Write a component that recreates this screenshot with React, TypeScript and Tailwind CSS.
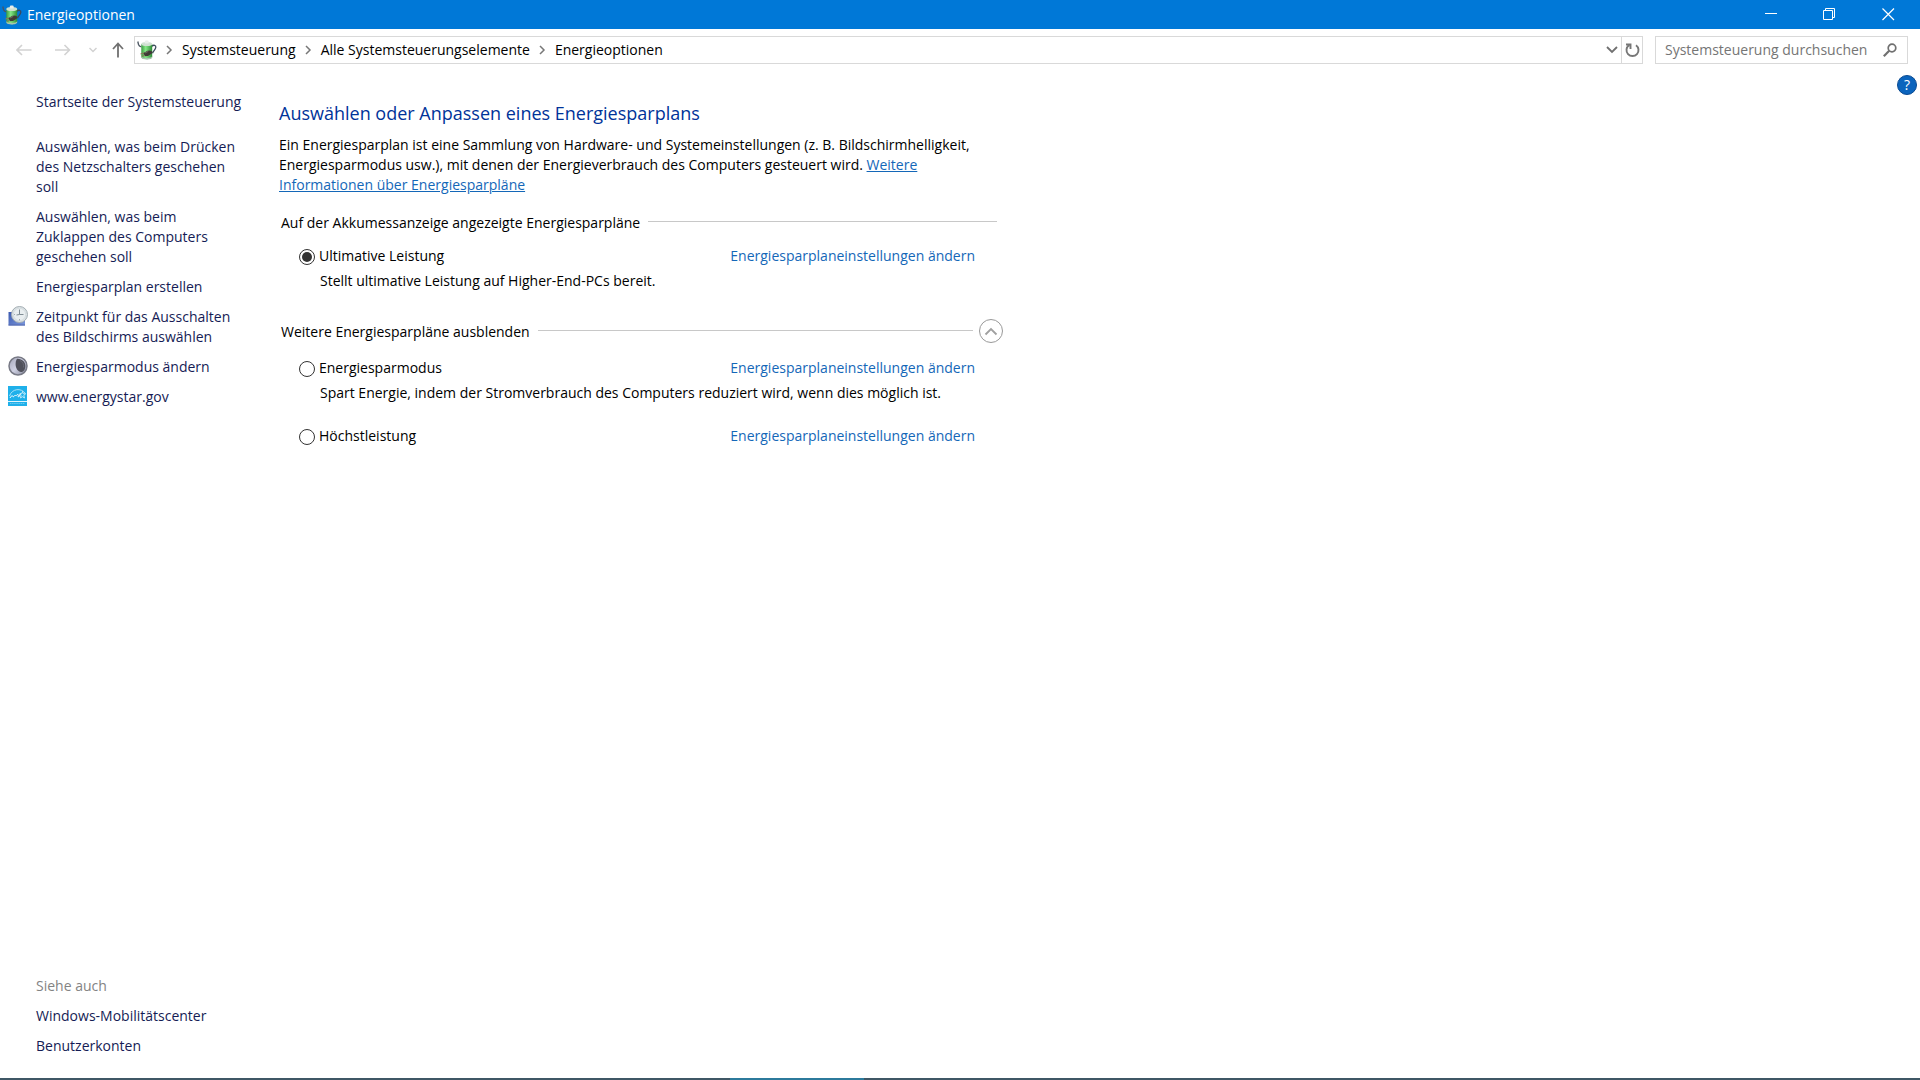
import { useState, type ReactNode } from "react";

const taskLinks = [
  { label: "Auswählen, was beim Drücken des Netzschalters geschehen soll", icon: null },
  { label: "Auswählen, was beim Zuklappen des Computers geschehen soll", icon: null },
  { label: "Energiesparplan erstellen", icon: null },
  { label: "Zeitpunkt für das Ausschalten des Bildschirms auswählen", icon: <ClockIcon /> },
  { label: "Energiesparmodus ändern", icon: <MoonIcon /> },
  { label: "www.energystar.gov", icon: <EnergyStarIcon /> },
];

const seeAlso = ["Windows-Mobilitätscenter", "Benutzerkonten"];

const crumbs = ["Systemsteuerung", "Alle Systemsteuerungselemente", "Energieoptionen"];

function BatteryIcon() {
  return (
    <svg width="20" height="20" viewBox="0 0 20 20" aria-hidden="true">
      <defs>
        <linearGradient id="cell" x1="0" x2="1" y1="0" y2="0">
          <stop offset="0" stopColor="#3a9a42" />
          <stop offset="0.4" stopColor="#86e886" />
          <stop offset="1" stopColor="#2b8a35" />
        </linearGradient>
      </defs>
      <path d="M.8 1.5 1.500 4.500C1.900 6 3 6.500 4.500 7" fill="none" stroke="#4a5560" strokeWidth="1.300" />
      <path d="M14.500 6.500c2-2 4.700-1.500 4.300.8-.4 2.200-2.300 3.400-3.300 6" fill="none" stroke="#3c4a5c" strokeWidth="1.300" />
      <path d="M4.300 4v13c0 3 10.900 3 10.900 0V4z" fill="url(#cell)" />
      <path d="M4.300 16v1.200c0 3 10.900 3 10.900 0V16c0 2.600-10.900 2.600-10.900 0z" fill="#a9c4ae" />
      <ellipse cx="9.750" cy="4" rx="5.450" ry="2" fill="#cfe0d1" />
      <rect x="7.800" y="0.600" width="3.900" height="3" rx="1.200" fill="#e9eeea" />
      <path d="m6 13.200 4.500-2.400 2.600-.3 2.400 1.300-.6 1.800-3.900 2.400-2.800.3z" fill="#3f3b35" />
      <path d="m3.500 14 3.200-.9M4.800 16.200l3-.9" stroke="#8a7a58" strokeWidth="1.100" />
      <path d="m8 13 3.200-1.600" stroke="#7d786c" strokeWidth="0.800" />
    </svg>
  );
}

function ClockIcon() {
  return (
    <svg width="20" height="20" viewBox="0 0 20 20" aria-hidden="true">
      <defs>
        <linearGradient id="screen" x1="0" x2="1" y1="0" y2="1">
          <stop offset="0" stopColor="#3c5ab0" />
          <stop offset="1" stopColor="#7c98dc" />
        </linearGradient>
      </defs>
      <path d="M.5 6H17v13.500H.5z" fill="url(#screen)" />
      <path d="M.5 19.500H17v-1H.5z" fill="#5468ac" />
      <circle cx="11.500" cy="8.500" r="8" fill="#dce3e6" stroke="#a3adb2" />
      <circle cx="11.500" cy="8.500" r="6.200" fill="#e9eef0" stroke="#cdd4d7" strokeWidth="0.600" />
      <path d="M11.500 3.500v5H15.500M11.500 8.500 8.500 9" fill="none" stroke="#7f8c94" />
      <path d="M11.500 13v1.500M6 8.500h1" stroke="#a3adb2" />
    </svg>
  );
}

function MoonIcon() {
  return (
    <svg width="20" height="20" viewBox="0 0 20 20" aria-hidden="true">
      <defs>
        <linearGradient id="moon" x1="0" x2="1" y1="0" y2="1">
          <stop offset="0" stopColor="#a3a5b8" />
          <stop offset="0.500" stopColor="#cfd1e2" />
          <stop offset="1" stopColor="#84869a" />
        </linearGradient>
      </defs>
      <circle cx="10" cy="10" r="9" fill="url(#moon)" stroke="#777985" strokeWidth="1.500" />
      <path d="M9 2.800C14.500 2.600 17.500 6.500 17.400 10c-.1 3.500-2 6.200-4.400 6-3-.3-5.200-3.500-5.400-7.200C7.500 6.300 8 4.200 9 2.800z" fill="#50515b" />
      <path d="M12 4.500c3 1.500 4 4 3.500 7" fill="none" stroke="#666771" />
    </svg>
  );
}

function EnergyStarIcon() {
  return (
    <svg width="19" height="20" viewBox="0 0 19 20" aria-hidden="true">
      <path d="M0 0h19v20H0z" fill="#1fb0ea" />
      <path d="M1.500 10C4 2.500 13 1.500 17.500 7.500" fill="none" stroke="#b9e6f8" strokeWidth="0.900" />
      <path d="M2 12c1-2 2.500-3 3-1.500s1.500-2 2.500-1 1.500-1.500 2.500-1-.5 3 .5 2.500 2-3.500 2-3.500" fill="none" stroke="#fff" />
      <path d="m14.500 5.500.8 2.200 2.200.2-1.700 1.500.7 2.600-2-1.300-2 1.200.5-2.400-1.500-1.600 2.200-.2z" fill="none" stroke="#e6f7fd" strokeWidth="0.800" />
      <path d="M0 15.500h19" stroke="#dff4fc" />
      <path d="M2 17.500h15" stroke="#6ccbf1" strokeDasharray="1.500 0.600" />
    </svg>
  );
}

function Chevron({ className }: { className: string }) {
  return (
    <svg className={className} width="8" height="10" viewBox="0 0 8 10" aria-hidden="true">
      <path d="m2 1 4 4-4 4" fill="none" stroke="currentColor" strokeWidth="1.500" />
    </svg>
  );
}

function CaptionButton({ label, children }: { label: string; children: ReactNode }) {
  return (
    <button aria-label={label} className="flex w-[59px] items-center justify-center hover:bg-white/10">
      <svg width="13" height="13" viewBox="0 0 13 13" fill="none" stroke="#fff" aria-hidden="true">
        {children}
      </svg>
    </button>
  );
}

function TitleBar() {
  return (
    <header className="flex h-[29px] shrink-0 bg-[#0078d7] pr-0.5 pl-0.5 text-white">
      <div className="flex flex-1 items-center gap-[5px]">
        <BatteryIcon />
        <h1>Energieoptionen</h1>
      </div>
      <CaptionButton label="Minimieren">
        <path d="M1 5.500h12" />
      </CaptionButton>
      <CaptionButton label="Verkleinern">
        <path d="M.5 2.500h9v9h-9zM2.500 2.500v-2h9v9h-2" />
      </CaptionButton>
      <CaptionButton label="Schließen">
        <path d="m.5.5 11.500 11.500M12 .5.5 12" strokeWidth="1.200" />
      </CaptionButton>
    </header>
  );
}

function AddressBar() {
  return (
    <div className="mt-[7px] flex h-7 shrink-0 items-stretch pr-3 pl-4">
      <nav aria-label="Navigation" className="flex items-center text-[#d2d2d2]">
        <button aria-label="Zurück" className="w-[39px]">
          <svg width="16" height="12" viewBox="0 0 16 12" fill="none" stroke="currentColor" strokeWidth="1.600">
            <path d="M15.500 6H1M6 1 1 6l5 5" />
          </svg>
        </button>
        <button aria-label="Vorwärts" className="w-[34px]">
          <svg width="16" height="12" viewBox="0 0 16 12" fill="none" stroke="currentColor" strokeWidth="1.600">
            <path d="M0 6h14.500M9.500 1l5 5-5 5" />
          </svg>
        </button>
        <button aria-label="Zuletzt besucht" className="w-[23px]">
          <svg width="8" height="6" viewBox="0 0 8 6" fill="none" stroke="currentColor" strokeWidth="1.500">
            <path d="m.5 1 3.500 3.500L7.500 1" />
          </svg>
        </button>
        <button aria-label="Nach oben" className="w-[22px] text-[#707070]">
          <svg width="12" height="16" viewBox="0 0 12 16" fill="none" stroke="currentColor" strokeWidth="1.800">
            <path d="M6 15.500V1.500M1 7l5-5.500L11 7" />
          </svg>
        </button>
      </nav>

      <div className="flex flex-1 items-stretch border border-[#d9d9d9]">
        <div className="flex flex-1 items-center pl-0.5">
          <BatteryIcon />
          {crumbs.map((crumb) => (
            <div key={crumb} className="flex items-center">
              <Chevron className="mr-[9px] ml-2 text-[#777]" />
              <a href="#">{crumb}</a>
            </div>
          ))}
        </div>
        <button aria-label="Vorherige Orte" className="flex w-[19px] items-center justify-center text-[#707070]">
          <svg width="12" height="8" viewBox="0 0 12 8" fill="none" stroke="currentColor" strokeWidth="1.800">
            <path d="m1 1 5 5 5-5" />
          </svg>
        </button>
        <button aria-label="Aktualisieren" className="flex w-[21px] items-center justify-center border-l border-[#d9d9d9] text-[#777]">
          <svg width="15" height="15" viewBox="0 0 15 15" fill="none" stroke="currentColor" strokeWidth="1.900">
            <path d="M11 2.200A6 6 0 1 1 4 2.200M1 1.500h4.500V6" />
          </svg>
        </button>
      </div>

      <form className="ml-3 flex w-[253px] items-center border border-[#d9d9d9] pr-2.5 pl-[9px]">
        <input
          type="search"
          aria-label="Systemsteuerung durchsuchen"
          placeholder="Systemsteuerung durchsuchen"
          className="min-w-0 flex-1 outline-none placeholder:text-[#757575]"
        />
        <svg width="14" height="14" viewBox="0 0 14 14" fill="none" stroke="#707070" strokeWidth="1.700" aria-hidden="true">
          <circle cx="9" cy="5" r="3.800" />
          <path d="M6.200 7.800.8 13.200" strokeWidth="2.200" />
        </svg>
      </form>
    </div>
  );
}

function Sidebar() {
  return (
    <aside className="flex w-[279px] shrink-0 flex-col pt-7 pb-[22px] pl-2 text-[#151c55]">
      <a href="#" className="ml-7">
        Startseite der Systemsteuerung
      </a>
      <ul className="mt-[25px] flex w-[236px] flex-col gap-2.5">
        {taskLinks.map((task) => (
          <li key={task.label} className="flex items-start">
            <span className="-mt-px w-7 shrink-0">{task.icon}</span>
            <a href="#">{task.label}</a>
          </li>
        ))}
      </ul>
      <div className="mt-auto ml-7 flex flex-col items-start gap-2.5">
        <h2 className="text-[#838383]">Siehe auch</h2>
        {seeAlso.map((label) => (
          <a key={label} href="#">
            {label}
          </a>
        ))}
      </div>
    </aside>
  );
}

type PlanProps = {
  name: string;
  description?: string;
  selected: string;
  onSelect: (name: string) => void;
};

function Plan({ name, description, selected, onSelect }: PlanProps) {
  return (
    <div className="pr-7 pl-[18px]">
      <div className="flex items-center justify-between">
        <label className="flex items-center gap-1">
          <input
            type="radio"
            name="plan"
            checked={selected === name}
            onChange={() => onSelect(name)}
            className="mt-0.5 size-4 appearance-none rounded-full border border-[#333] bg-white bg-clip-content p-0.5 checked:bg-[#333]"
          />
          {name}
        </label>
        <a href="#" className="text-[#1467b8]">
          Energiesparplaneinstellungen ändern
        </a>
      </div>
      {description && <p className="mt-[5px] pl-[21px]">{description}</p>}
    </div>
  );
}

export default function App() {
  const [selected, setSelected] = useState("Ultimative Leistung");
  const [expanded, setExpanded] = useState(true);

  return (
    <div className="flex min-h-screen flex-col bg-white font-['Open_Sans','Noto_Sans',sans-serif] text-[14px] leading-5 text-black">
      <TitleBar />
      <AddressBar />

      <div className="flex flex-1">
        <Sidebar />

        <main className="w-full max-w-[724px] pt-[37px]">
          <h2 className="text-[18px] leading-6 text-[#003399]">Auswählen oder Anpassen eines Energiesparplans</h2>
          <p className="mt-2.5 pr-5">
            Ein Energiesparplan ist eine Sammlung von Hardware- und Systemeinstellungen (z. B. Bildschirmhelligkeit,
            Energiesparmodus usw.), mit denen der Energieverbrauch des Computers gesteuert wird.{" "}
            <a href="#" className="text-[#1467b8] underline">
              Weitere Informationen über Energiesparpläne
            </a>
          </p>

          <section className="mt-[18px] pl-0.5">
            <div className="flex items-start gap-2 pr-1.5">
              <h3>Auf der Akkumessanzeige angezeigte Energiesparpläne</h3>
              <div className="mt-2 h-px flex-1 bg-[#c8c8c8]" />
            </div>
            <div className="mt-[13px]">
              <Plan
                name="Ultimative Leistung"
                description="Stellt ultimative Leistung auf Higher-End-PCs bereit."
                selected={selected}
                onSelect={setSelected}
              />
            </div>
          </section>

          <section className="mt-7 pl-0.5">
            <div className="flex items-start">
              <h3 className="pt-[3px]">Weitere Energiesparpläne ausblenden</h3>
              <div className="mt-[11px] mr-1.5 ml-2 h-px flex-1 bg-[#c8c8c8]" />
              <button
                aria-label="Weitere Energiesparpläne ausblenden"
                aria-expanded={expanded}
                onClick={() => setExpanded(!expanded)}
                className="flex size-6 items-center justify-center rounded-full border border-[#999]"
              >
                <svg width="14" height="9" viewBox="0 0 14 9" fill="none" stroke="#a0a0a0" strokeWidth="1.800">
                  <path d="m1.500 7.500 5.500-5.500 5.500 5.500" />
                </svg>
              </button>
            </div>
            {expanded && (
              <div className="mt-[15px] flex flex-col gap-[23px]">
                <Plan
                  name="Energiesparmodus"
                  description="Spart Energie, indem der Stromverbrauch des Computers reduziert wird, wenn dies möglich ist."
                  selected={selected}
                  onSelect={setSelected}
                />
                <Plan name="Höchstleistung" selected={selected} onSelect={setSelected} />
              </div>
            )}
          </section>
        </main>

        <div className="ml-auto pt-[11px] pr-[3px]">
          <button
            aria-label="Hilfe"
            className="flex size-5 items-center justify-center rounded-full border border-[#0a4a92] bg-[#0b64bd] text-white"
          >
            ?
          </button>
        </div>
      </div>

      {/* collapsed taskbar edge */}
      <footer className="flex h-0.5 shrink-0 bg-[#3f5765]">
        <div className="ml-[38%] w-[7%] bg-[#2c7a9c]" />
      </footer>
    </div>
  );
}
